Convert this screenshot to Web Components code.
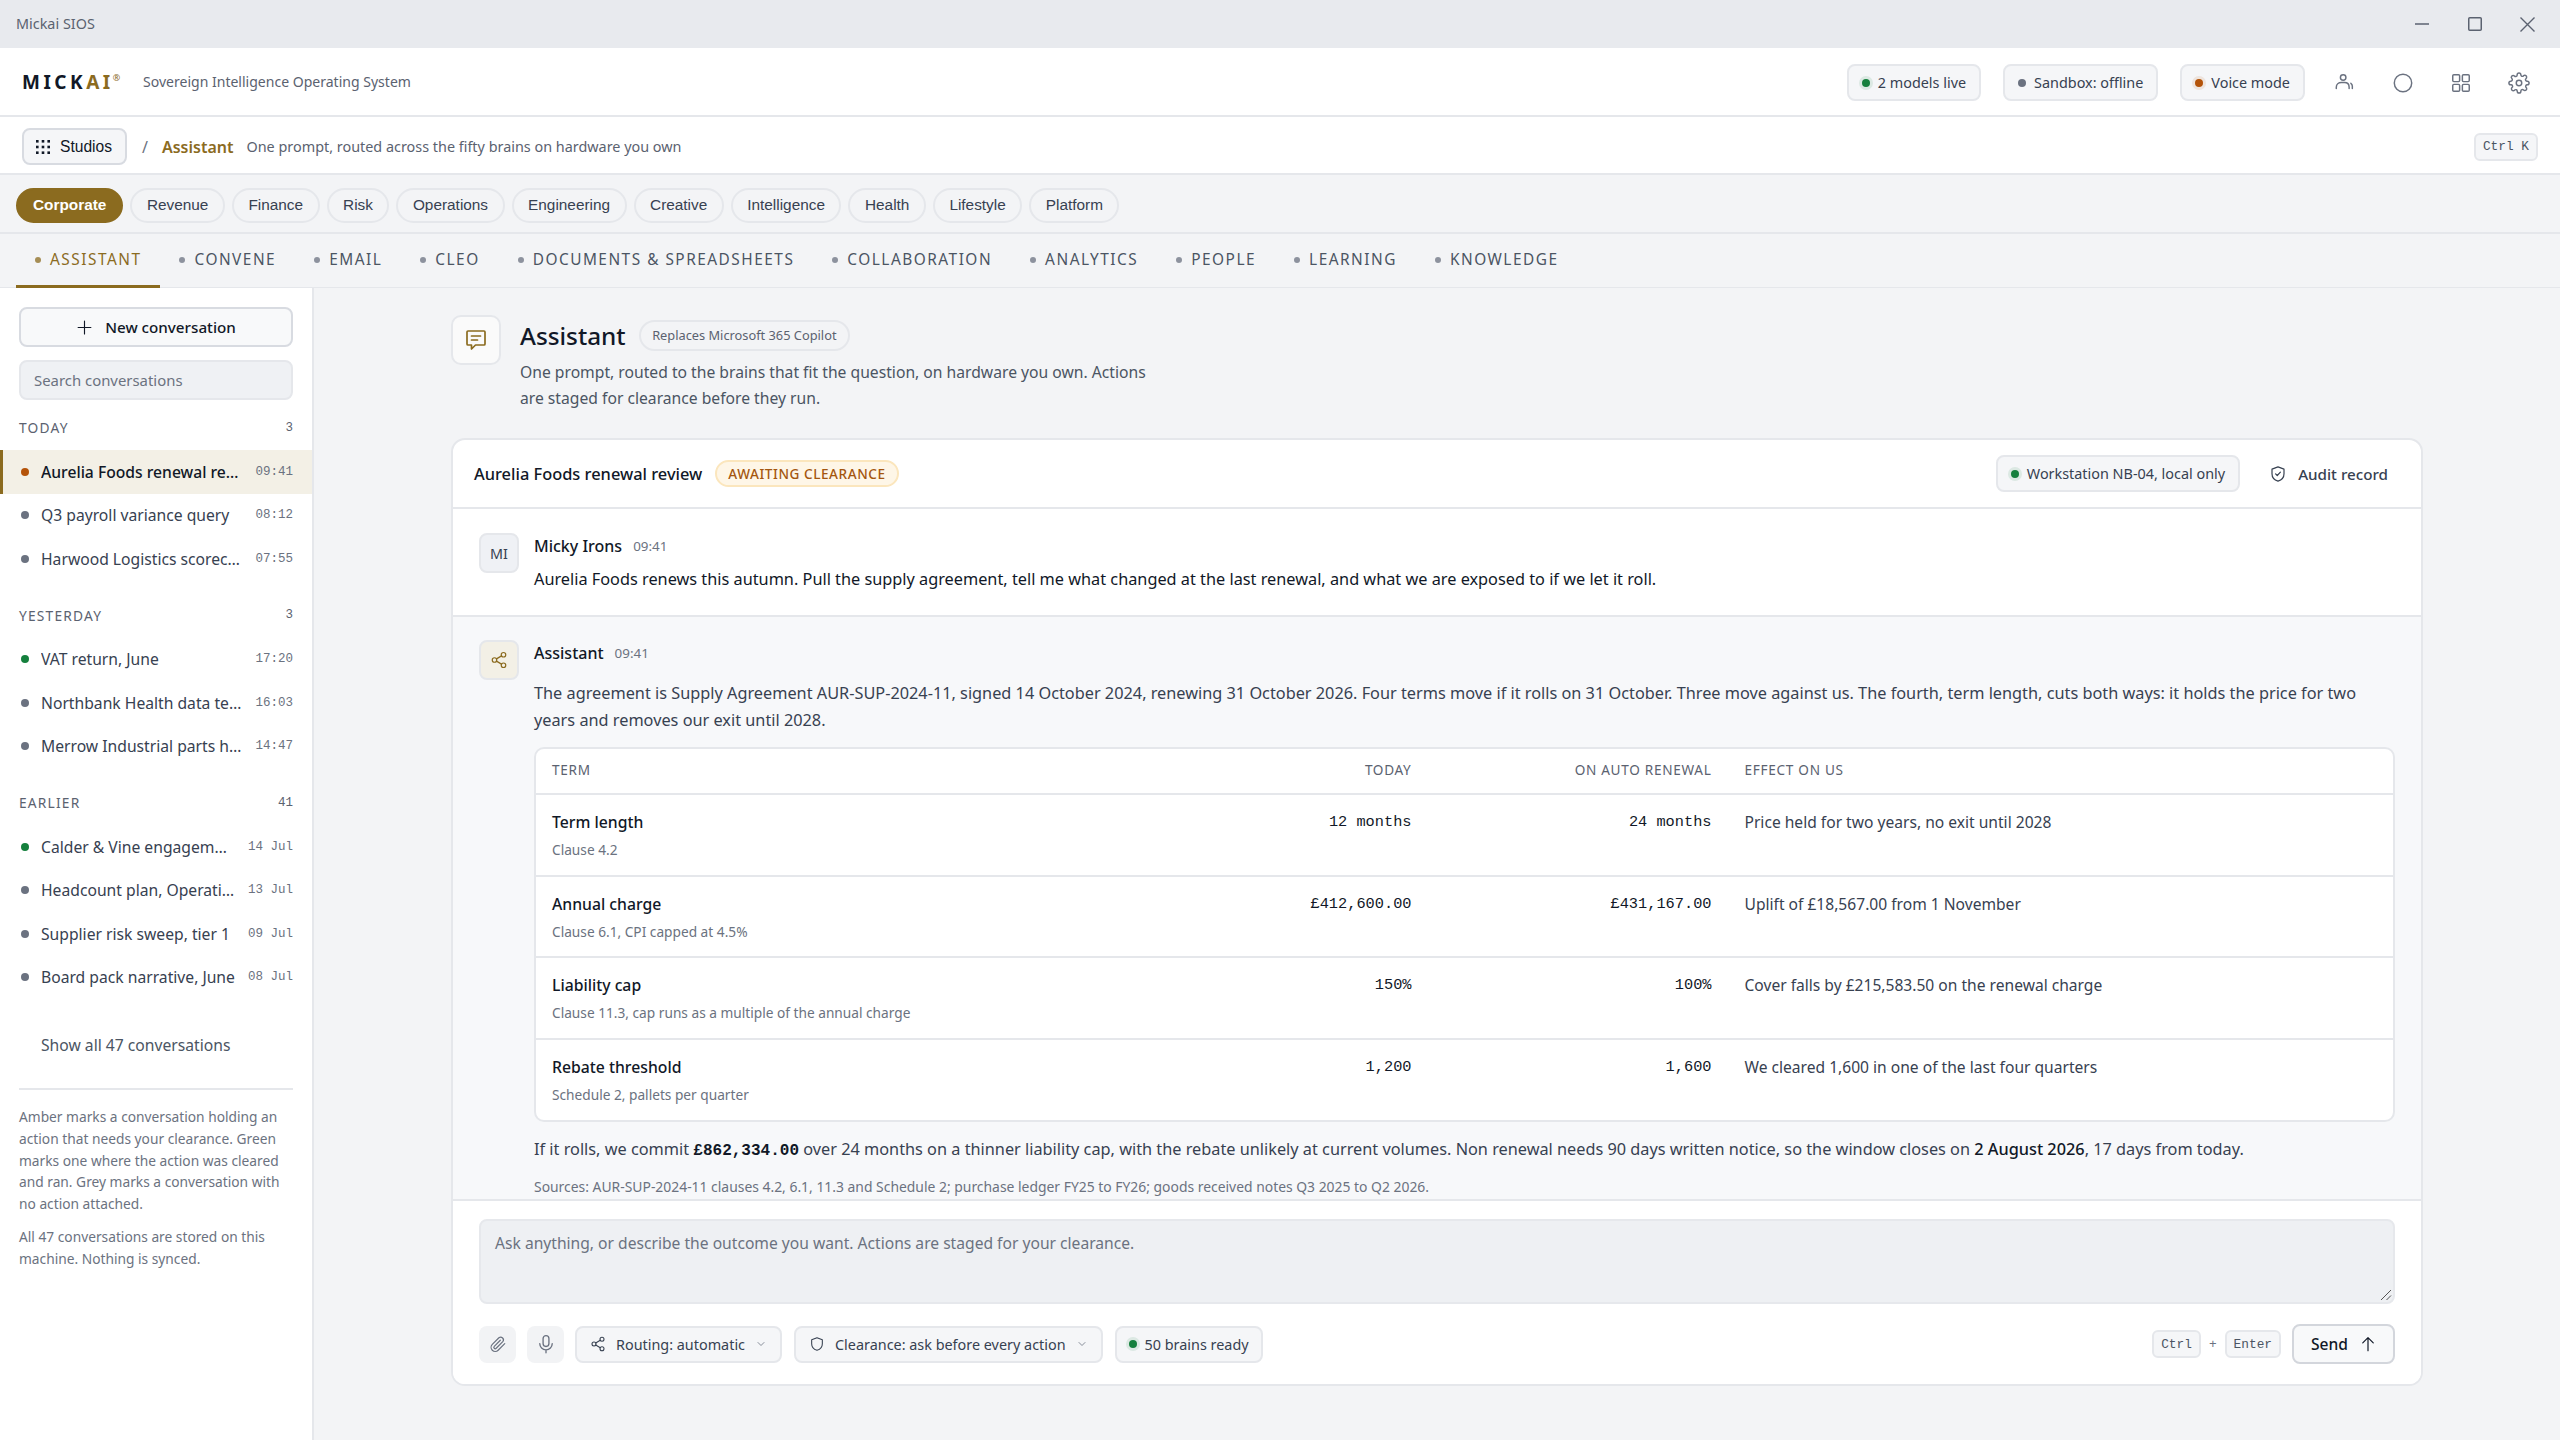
<!doctype html>
<html lang="en">
<head>
<meta charset="utf-8">
<title>Mickai SIOS</title>
<style>
  html, body { margin: 0; height: 100%; overflow: hidden; }
  body { font-family: "Noto Sans", sans-serif; color: #111827; background: #f3f4f6; }
</style>
</head>
<body>
<mk-app></mk-app>
<script>
const SANS = '"Noto Sans", sans-serif';
const MONO = '"Liberation Mono", monospace';
const BORDER = '#e5e7eb';

const icons = {
  person: '<circle cx="10" cy="6" r="3"/><path d="M2.5 18v-1.5C2.5 13.5 5 11.5 8 11.5h3.5c3 0 5 2 5 5V18"/><path d="M20 18v-2.5c0-1.4-.6-2.5-1.6-3.2"/>',
  circle: '<circle cx="12" cy="12" r="9.5"/>',
  grid: '<rect x="3" y="3" width="7.5" height="7.5" rx="1.2"/><rect x="13.5" y="3" width="7.5" height="7.5" rx="1.2"/><rect x="3" y="13.5" width="7.5" height="7.5" rx="1.2"/><rect x="13.5" y="13.5" width="7.5" height="7.5" rx="1.2"/>',
  gear: '<circle cx="12" cy="12" r="3"/><path d="M19.4 15a1.65 1.65 0 0 0 .33 1.82l.06.06a2 2 0 1 1-2.83 2.83l-.06-.06a1.65 1.65 0 0 0-2.82 1.17V21a2 2 0 1 1-4 0v-.09a1.65 1.65 0 0 0-2.82-1.17l-.06.06a2 2 0 1 1-2.83-2.83l.06-.06A1.65 1.65 0 0 0 3.09 14H3a2 2 0 1 1 0-4h.09a1.65 1.65 0 0 0 1.17-2.82l-.06-.06a2 2 0 1 1 2.83-2.83l.06.06A1.65 1.65 0 0 0 10 3.09V3a2 2 0 1 1 4 0v.09a1.65 1.65 0 0 0 2.82 1.17l.06-.06a2 2 0 1 1 2.83 2.83l-.06.06A1.65 1.65 0 0 0 20.91 10H21a2 2 0 1 1 0 4h-.09a1.65 1.65 0 0 0-1.51 1z"/>',
  share: '<circle cx="18" cy="5" r="3"/><circle cx="6" cy="12" r="3"/><circle cx="18" cy="19" r="3"/><path d="M8.6 13.5l6.8 4M15.4 6.5l-6.8 4"/>',
  shield: '<path d="M12 2.5l8 3v6c0 5-3.4 8.6-8 10-4.6-1.4-8-5-8-10v-6z"/>',
  shieldCheck: '<path d="M12 2.5l8 3v6c0 5-3.4 8.6-8 10-4.6-1.4-8-5-8-10v-6z"/><path d="M8.8 11.8l2.2 2.2 4.2-4.4"/>',
  chevron: '<path d="M6 9l6 6 6-6"/>',
  clip: '<path d="M21 11.5l-8.8 8.8a5.5 5.5 0 0 1-7.8-7.8l8.8-8.8a3.7 3.7 0 0 1 5.2 5.2l-8.8 8.8a1.8 1.8 0 0 1-2.6-2.6l8.1-8.1"/>',
  mic: '<rect x="8.5" y="2" width="7" height="13" rx="3.5"/><path d="M4.5 11.5a7.5 7.5 0 0 0 15 0M12 19v3.5"/>',
  plus: '<path d="M12 3v18M3 12h18"/>',
  arrow: '<path d="M12 21V3.5M5 10.5l7-7 7 7"/>',
  chat: '<path d="M4 3h16a1 1 0 0 1 1 1v12a1 1 0 0 1-1 1h-8.5L7.5 21v-4H4a1 1 0 0 1-1-1V4a1 1 0 0 1 1-1z"/><path d="M7.5 8h9M7.5 12h6"/>'
};
function icon(name, size, stroke, width) {
  return `<svg width="${size}" height="${size}" viewBox="0 0 24 24" fill="none" stroke="${stroke || 'currentColor'}" stroke-width="${width || 1.6}" stroke-linecap="round" stroke-linejoin="round">${icons[name]}</svg>`;
}

// small base class, every element just sets its markup once
class Base extends HTMLElement {
  constructor() {
    super();
    this.attachShadow({ mode: 'open' });
  }
  connectedCallback() {
    this.shadowRoot.innerHTML = this.render();
  }
}

class MkDot extends Base {
  render() {
    const colors = { green: '#15803d', grey: '#6b7280', amber: '#b45309', gold: '#8b6b1f' };
    const c = colors[this.getAttribute('tone')] || colors.grey;
    const size = this.getAttribute('size') || 8;
    const halo = this.hasAttribute('halo') ? `box-shadow: 0 0 0 3px ${c}1c;` : '';
    return `<style>:host { display: inline-block; flex: none; width: ${size}px; height: ${size}px; border-radius: 50%; background: ${c}; ${halo} }</style>`;
  }
}

class MkChip extends Base {
  render() {
    return `<style>
      :host { display: inline-flex; align-items: center; gap: var(--chip-gap, 8px); height: 37px; box-sizing: border-box; padding: 0 var(--chip-pad, 13px);
        background: #f5f6f8; border: 2px solid ${BORDER}; border-radius: 8px; font: 400 14.4px ${SANS}; color: #374151; white-space: nowrap; }
    </style><slot></slot>`;
  }
}

class MkKbd extends Base {
  render() {
    return `<style>
      :host { display: inline-flex; align-items: center; justify-content: center; height: 28px; box-sizing: border-box; padding: 0 7px;
        background: #f5f6f8; border: 2px solid ${BORDER}; border-radius: 6px; font: 400 12.8px ${MONO}; color: #4b5563; white-space: nowrap; }
    </style><slot></slot>`;
  }
}

class MkTitlebar extends Base {
  render() {
    return `<style>
      :host { display: flex; align-items: center; justify-content: space-between; height: 48px; flex: none; background: #e8eaee; padding-left: 16px; font: 400 14.4px ${SANS}; color: #5b6270; }
      .t { margin-bottom: 2px; }
      .ctl { display: flex; padding-right: 6px; }
      .ctl span { width: 53px; height: 48px; display: flex; align-items: center; justify-content: center; }
    </style>
    <span class="t">Mickai SIOS</span>
    <div class="ctl">
      <span><svg width="14" height="14" viewBox="0 0 14 14" stroke="#5b6270" stroke-width="1.5"><path d="M0 7h14"/></svg></span>
      <span><svg width="14" height="14" viewBox="0 0 14 14" fill="none" stroke="#5b6270" stroke-width="1.5"><rect x=".75" y=".75" width="12.5" height="12.5" rx="1"/></svg></span>
      <span><svg width="15" height="15" viewBox="0 0 15 15" stroke="#5b6270" stroke-width="1.4"><path d="M.5.5l14 14M14.5.5l-14 14"/></svg></span>
    </div>`;
  }
}

class MkHeader extends Base {
  render() {
    return `<style>
      :host { display: flex; align-items: center; height: 69px; box-sizing: border-box; flex: none; background: #fff; border-bottom: 2px solid ${BORDER}; padding: 2px 22px 0; }
      .logo { font: 700 19px ${SANS}; letter-spacing: 3.5px; color: #111827; display: flex; width: 121px; flex: none; margin-bottom: 1px; }
      .logo b { color: #8b6b1f; font-weight: 700; }
      .logo sup { font-size: 9px; font-weight: 400; letter-spacing: 0; color: #8b6b1f; line-height: 1; margin: 4px 0 0 -1px; }
      .tag { font-size: 14.04px; color: #5b6270; margin-bottom: 2px; }
      .right { margin-left: auto; display: flex; align-items: center; gap: 22px; }
      .ic { display: flex; gap: 36px; margin: 0 8px 0 7px; color: #6b7280; }
      .ic svg { display: block; }
    </style>
    <div class="logo">MICK<b>AI</b><sup>®</sup></div>
    <span class="tag">Sovereign Intelligence Operating System</span>
    <div class="right">
      <mk-chip><mk-dot tone="green" halo></mk-dot>2 models live</mk-chip>
      <mk-chip><mk-dot tone="grey"></mk-dot>Sandbox: offline</mk-chip>
      <mk-chip><mk-dot tone="amber" halo></mk-dot>Voice mode</mk-chip>
      <div class="ic">${icon('person', 22)}${icon('circle', 22)}${icon('grid', 22)}${icon('gear', 22)}</div>
    </div>`;
  }
}

class MkCrumbs extends Base {
  render() {
    return `<style>
      :host { display: flex; align-items: center; height: 58px; box-sizing: border-box; flex: none; background: #fff; border-bottom: 2px solid ${BORDER}; padding: 3px 22px 0; }
      button { display: flex; align-items: center; gap: 10px; height: 37px; width: 105px; box-sizing: border-box; padding: 0 0 0 12px; background: #f5f6f8;
        border: 2px solid #d8dbe1; border-radius: 8px; font: 400 15.6px "Liberation Sans", sans-serif; color: #111827; }
      .sl { margin: 0 14px 0 15px; color: #6b7280; font-size: 16px; }
      .cur { color: #8b6b1f; font-size: 16px; font-weight: 600; margin-right: 13px; }
      .d { font-size: 14.4px; color: #5b6270; }
      mk-kbd { margin-left: auto; }
      svg { display: block; }
    </style>
    <button><svg width="14" height="14" viewBox="0 0 14 14" fill="#111827">
      <rect x="0" y="0" width="2.6" height="2.6"/><rect x="5.7" y="0" width="2.6" height="2.6"/><rect x="11.4" y="0" width="2.6" height="2.6"/>
      <rect x="0" y="5.7" width="2.6" height="2.6"/><rect x="5.7" y="5.7" width="2.6" height="2.6"/><rect x="11.4" y="5.7" width="2.6" height="2.6"/>
      <rect x="0" y="11.4" width="2.6" height="2.6"/><rect x="5.7" y="11.4" width="2.6" height="2.6"/><rect x="11.4" y="11.4" width="2.6" height="2.6"/>
    </svg>Studios</button>
    <span class="sl">/</span><span class="cur">Assistant</span><span class="d">One prompt, routed across the fifty brains on hardware you own</span>
    <mk-kbd>Ctrl K</mk-kbd>`;
  }
}

class MkDomains extends Base {
  render() {
    const names = ['Corporate', 'Revenue', 'Finance', 'Risk', 'Operations', 'Engineering', 'Creative', 'Intelligence', 'Health', 'Lifestyle', 'Platform'];
    return `<style>
      :host { display: flex; align-items: center; gap: 7px; height: 59px; box-sizing: border-box; flex: none; border-bottom: 2px solid ${BORDER}; padding: 3px 16px 0; background: #f3f4f6; }
      span { display: flex; align-items: center; height: 35px; box-sizing: border-box; padding: 0 14.5px; border: 2px solid ${BORDER}; border-radius: 18px;
        font: 400 15.36px "Liberation Sans", sans-serif; color: #374151; }
      .on { background: #8b6b1f; border-color: #8b6b1f; color: #fff; font-weight: 700; padding: 0 15px; }
    </style>` + names.map((n, i) => `<span class="${i ? '' : 'on'}">${n}</span>`).join('');
  }
}

class MkTabs extends Base {
  render() {
    const names = ['Assistant', 'Convene', 'Email', 'Cleo', 'Documents &amp; Spreadsheets', 'Collaboration', 'Analytics', 'People', 'Learning', 'Knowledge'];
    return `<style>
      :host { display: flex; height: 54px; box-sizing: border-box; flex: none; border-bottom: 1px solid ${BORDER}; padding: 0 16px; background: #f3f4f6; }
      div { display: flex; align-items: center; gap: 9px; padding: 0 19px; margin-bottom: -1px; box-sizing: border-box; border-bottom: 3px solid transparent;
        font: 400 15.4px ${SANS}; letter-spacing: 1.5px; text-transform: uppercase; color: #4b5563; }
      .on { color: #8b6b1f; border-bottom-color: #8b6b1f; }
      mk-dot { opacity: .75; }
    </style>` + names.map((n, i) => `<div class="${i ? '' : 'on'}"><mk-dot size="6" tone="${i ? 'grey' : 'gold'}"></mk-dot>${n}</div>`).join('');
  }
}

class MkConv extends Base {
  render() {
    const active = this.hasAttribute('active');
    return `<style>
      :host { display: flex; align-items: center; height: 43.5px; box-sizing: border-box; padding: 0 19px 0 21px; gap: 12px; font: ${active ? 500 : 400} 15.68px ${SANS}; color: ${active ? '#111827' : '#374151'};
        ${active ? 'background: #f3f0e6; box-shadow: inset 3px 0 0 #8b6b1f;' : ''} }
      .t { flex: 1; min-width: 0; white-space: nowrap; overflow: hidden; }
      .w { flex: none; font: 400 12.5px ${MONO}; color: #6b7280; }
    </style>
    <mk-dot tone="${this.getAttribute('tone')}"></mk-dot><span class="t"><slot></slot></span><span class="w">${this.getAttribute('when')}</span>`;
  }
}

class MkGroup extends Base {
  render() {
    return `<style>
      :host { display: block; margin-bottom: 23px; }
      .h { display: flex; justify-content: space-between; align-items: center; height: 23px; padding: 0 19px; margin-bottom: 11px; font: 400 13.76px ${SANS}; letter-spacing: 1.2px; color: #5b6270; text-transform: uppercase; }
      .h span:last-child { font: 400 12.5px ${MONO}; letter-spacing: 0; }
    </style>
    <div class="h"><span>${this.getAttribute('label')}</span><span>${this.getAttribute('count')}</span></div><slot></slot>`;
  }
}

class MkSidebar extends Base {
  render() {
    return `<style>
      :host { display: flex; flex-direction: column; flex: none; width: 314px; box-sizing: border-box; background: #fff; border-right: 2px solid ${BORDER}; padding-top: 19px; overflow: hidden; }
      .new { display: flex; align-items: center; justify-content: center; gap: 12px; height: 40px; flex: none; margin: 0 19px 13px; box-sizing: border-box; background: #f8f9fa; border: 2px solid #d8dbe1; border-radius: 8px;
        font: 500 15.2px ${SANS}; color: #111827; }
      .search { display: flex; align-items: center; height: 40px; flex: none; margin: 0 19px 16px; padding: 0 13px; box-sizing: border-box; background: #eff1f4; border: 2px solid ${BORDER}; border-radius: 8px; font-size: 14.9px; color: #6b7280; }
      .all { padding-left: 41px; height: 22px; flex: none; margin: 12px 0 32px; font-size: 15.68px; color: #4b5563; line-height: 22px; }
      .note { margin: 0 19px; padding-top: 16px; border-top: 2px solid ${BORDER}; font-size: 13.76px; line-height: 21.8px; color: #6b7280; }
      .note p { margin: 0 0 11px; }
      svg { display: block; }
    </style>
    <div class="new">${icon('plus', 17)}New conversation</div>
    <div class="search">Search conversations</div>
    <slot></slot>
    <div class="all">Show all 47 conversations</div>
    <div class="note">
      <p>Amber marks a conversation holding an action that needs your clearance. Green marks one where the action was cleared and ran. Grey marks a conversation with no action attached.</p>
      <p>All 47 conversations are stored on this machine. Nothing is synced.</p>
    </div>`;
  }
}

class MkPageHead extends Base {
  render() {
    return `<style>
      :host { display: flex; gap: 19px; flex: none; margin-bottom: 27px; }
      .box { width: 50px; height: 50px; box-sizing: border-box; background: #fafafa; border: 2px solid ${BORDER}; border-radius: 10px; display: flex; align-items: center; justify-content: center; flex: none; color: #8b6b1f; }
      .row { display: flex; align-items: center; gap: 13px; height: 40px; }
      h1 { margin: 0; font: 500 24.3px ${SANS}; color: #111827; }
      .tag { display: flex; align-items: center; height: 31px; box-sizing: border-box; padding: 0 11.5px; border: 2px solid ${BORDER}; border-radius: 16px; font-size: 12.8px; color: #5b6270; }
      p { margin: 5px 0 0; width: 640px; font-size: 15.68px; line-height: 25.6px; color: #4b5563; }
      svg { display: block; }
    </style>
    <div class="box">${icon('chat', 24, 'currentColor', 1.7)}</div>
    <div>
      <div class="row"><h1>Assistant</h1><span class="tag">Replaces Microsoft 365 Copilot</span></div>
      <p>One prompt, routed to the brains that fit the question, on hardware you own. Actions are staged for clearance before they run.</p>
    </div>`;
  }
}

class MkCardHead extends Base {
  render() {
    return `<style>
      :host { display: flex; align-items: center; flex: none; height: 69px; box-sizing: border-box; border-bottom: 2px solid ${BORDER}; padding: 0 33px 0 21px; }
      .t { font: 500 16.4px ${SANS}; color: #111827; margin-right: 13px; }
      .b { display: flex; align-items: center; height: 27px; box-sizing: border-box; padding: 0 11px; background: #fef6e7; border: 2px solid #fbe6bd; border-radius: 14px; font: 500 13.6px ${SANS}; letter-spacing: .55px; color: #a4560f; }
      .r { margin-left: auto; display: flex; align-items: center; }
      .a { display: flex; align-items: center; gap: 11px; margin-left: 29px; font: 500 15.2px ${SANS}; color: #374151; }
      svg { display: block; }
    </style>
    <span class="t">Aurelia Foods renewal review</span><span class="b">AWAITING CLEARANCE</span>
    <div class="r"><mk-chip><mk-dot tone="green" halo></mk-dot>Workstation NB-04, local only</mk-chip>
    <span class="a">${icon('shieldCheck', 18)}Audit record</span></div>`;
  }
}

class MkMessage extends Base {
  render() {
    const bot = this.hasAttribute('assistant');
    return `<style>
      :host { display: flex; gap: 15px; padding: ${bot ? 23 : 24}px 26px 0; box-sizing: border-box; flex: none; ${bot ? 'background: #f7f8fa;' : 'height: 108px; background: #fff; border-bottom: 2px solid ' + BORDER + ';'} }
      .av { width: 40px; height: 40px; box-sizing: border-box; flex: none; border-radius: 8px; display: flex; align-items: center; justify-content: center; border: 2px solid ${BORDER};
        background: ${bot ? '#f3f0e6' : '#eff1f5'}; color: ${bot ? '#8b6b1f' : '#374151'}; font-size: 14.4px; }
      .b { flex: 1; min-width: 0; }
      .h { display: flex; align-items: center; gap: 11px; height: 26px; font: 500 16px ${SANS}; color: #111827; }
      .h span { font-size: 13.4px; font-weight: 400; color: #6b7280; }
      svg { display: block; }
    </style>
    <div class="av">${bot ? icon('share', 18) : 'MI'}</div>
    <div class="b"><div class="h">${this.getAttribute('who')}<span>${this.getAttribute('at')}</span></div><slot></slot></div>`;
  }
}

class MkTermTable extends Base {
  render() {
    const rows = [
      ['Term length', 'Clause 4.2', '12 months', '24 months', 'Price held for two years, no exit until 2028'],
      ['Annual charge', 'Clause 6.1, CPI capped at 4.5%', '£412,600.00', '£431,167.00', 'Uplift of £18,567.00 from 1 November'],
      ['Liability cap', 'Clause 11.3, cap runs as a multiple of the annual charge', '150%', '100%', 'Cover falls by £215,583.50 on the renewal charge'],
      ['Rebate threshold', 'Schedule 2, pallets per quarter', '1,200', '1,600', 'We cleared 1,600 in one of the last four quarters']
    ];
    return `<style>
      :host { display: block; background: #fff; border: 2px solid ${BORDER}; border-radius: 10px; margin: 13px 0 14px; }
      .r { display: grid; grid-template-columns: 589.5px 300px 300px 1fr; height: 81.6px; box-sizing: border-box; border-top: 2px solid ${BORDER}; }
      .head { height: 44px; padding-bottom: 3px; border-top: 0; align-items: center; font-size: 13.6px; letter-spacing: .7px; color: #5b6270; }
      .r > div { padding: 0 14px; }
      .r > div:first-child { padding-left: 16px; }
      .r > div:last-child { padding-left: 19px; }
      .n { text-align: right; }
      .v { padding-top: 17px !important; font: 400 15.3px/20px ${MONO}; color: #111827; }
      .fx { padding-top: 17px !important; font-size: 15.6px; line-height: 20px; color: #374151; }
      .t { padding-top: 17px !important; }
      .t b { display: block; font: 500 15.76px/20px ${SANS}; color: #111827; }
      .t small { display: block; margin-top: 8px; font-size: 13.7px; line-height: 20px; color: #6b7280; }
    </style>
    <div class="r head"><div>TERM</div><div class="n">TODAY</div><div class="n">ON AUTO RENEWAL</div><div>EFFECT ON US</div></div>
    ${rows.map(r => `<div class="r"><div class="t"><b>${r[0]}</b><small>${r[1]}</small></div><div class="n v">${r[2]}</div><div class="n v">${r[3]}</div><div class="fx">${r[4]}</div></div>`).join('')}`;
  }
}

class MkAnswer extends Base {
  render() {
    return `<style>
      :host { display: block; font-size: 16.3px; line-height: 27px; color: #374151; }
      p { margin: 14px 0 0; }
      .m { font: 700 16px ${MONO}; color: #111827; }
      .s { color: #111827; font-weight: 500; }
      .src { margin-top: 13px; font-size: 13.9px; line-height: 22px; color: #6b7280; white-space: nowrap; }
      .after { margin: 0; }
    </style>
    <p>The agreement is Supply Agreement AUR-SUP-2024-11, signed 14 October 2024, renewing 31 October 2026. Four terms move if it rolls on 31 October. Three move against us. The fourth, term length, cuts both ways: it holds the price for two years and removes our exit until 2028.</p>
    <mk-term-table></mk-term-table>
    <p class="after">If it rolls, we commit <span class="m">£862,334.00</span> over 24 months on a thinner liability cap, with the rebate unlikely at current volumes. Non renewal needs 90 days written notice, so the window closes on <span class="s">2 August 2026</span>, 17 days from today.</p>
    <div class="src">Sources: AUR-SUP-2024-11 clauses 4.2, 6.1, 11.3 and Schedule 2; purchase ledger FY25 to FY26; goods received notes Q3 2025 to Q2 2026.</div>`;
  }
}

class MkComposer extends Base {
  render() {
    return `<style>
      :host { display: block; flex: none; height: 185px; box-sizing: border-box; background: #fff; border-top: 2px solid ${BORDER}; padding: 18px 26px 0; font-size: 14.4px; }
      .box { position: relative; height: 85px; box-sizing: border-box; background: #eef0f3; border: 2px solid #e6e8ec; border-radius: 8px; padding: 10px 14px; font-size: 15.64px; line-height: 24px; color: #6b7280; }
      .grip { position: absolute; right: 1px; bottom: 1px; }
      .bar { display: flex; align-items: center; gap: 11px; margin-top: 20px; height: 40px; }
      .sq { width: 37px; height: 37px; flex: none; background: #f2f3f5; border-radius: 8px; display: flex; align-items: center; justify-content: center; color: #6b7280; }
      mk-chip + mk-chip { margin-left: 1px; }
      .pick { --chip-gap: 10px; --chip-pad: 13px; }
      .tight { --chip-pad: 12px; }
      .pick svg:last-child { color: #6b7280; }
      .end { margin-left: auto; display: flex; align-items: center; gap: 8px; }
      .plus { color: #6b7280; font: 400 12.8px ${MONO}; }
      .send { display: flex; align-items: center; gap: 11px; height: 40px; width: 103px; box-sizing: border-box; padding-left: 17px; margin-left: 3px; background: #f8f9fa; border: 2px solid #d3d6dc; border-radius: 8px; font: 500 15.6px ${SANS}; color: #111827; }
      svg { display: block; flex: none; }
    </style>
    <div class="box">Ask anything, or describe the outcome you want. Actions are staged for your clearance.
      <svg class="grip" width="14" height="14" viewBox="0 0 14 14" stroke="#555" stroke-width="1"><path d="M3 13L13 3M8.5 13L13 8.5"/></svg>
    </div>
    <div class="bar">
      <div class="sq">${icon('clip', 18)}</div>
      <div class="sq">${icon('mic', 20)}</div>
      <mk-chip class="pick">${icon('share', 16)}Routing: automatic${icon('chevron', 12)}</mk-chip>
      <mk-chip class="pick">${icon('shield', 16)}Clearance: ask before every action${icon('chevron', 12)}</mk-chip>
      <mk-chip class="tight"><mk-dot tone="green" halo></mk-dot>50 brains ready</mk-chip>
      <div class="end"><mk-kbd>Ctrl</mk-kbd><span class="plus">+</span><mk-kbd>Enter</mk-kbd>
        <div class="send">Send${icon('arrow', 18)}</div></div>
    </div>`;
  }
}

class MkApp extends Base {
  render() {
    const group = (label, count, items) => `<mk-group label="${label}" count="${count}">` + items.map(i =>
      `<mk-conv tone="${i[0]}" when="${i[1]}" ${i[3] ? 'active' : ''}>${i[2]}</mk-conv>`).join('') + '</mk-group>';
    return `<style>
      :host { display: flex; flex-direction: column; height: 100vh; overflow: hidden; font-family: ${SANS}; }
      .body { flex: 1; min-height: 0; display: flex; }
      main { flex: 1; min-width: 0; display: flex; flex-direction: column; align-items: center; padding: 27px 0 54px; box-sizing: border-box; }
      .page { width: 1972px; flex: 1; min-height: 0; display: flex; flex-direction: column; }
      .card { flex: 1; min-height: 0; display: flex; flex-direction: column; background: #fff; border: 2px solid ${BORDER}; border-radius: 14px; overflow: hidden; }
      .scroll { flex: 1; min-height: 0; overflow: hidden; display: flex; flex-direction: column; background: #f7f8fa; }
      .q { margin: 7px 0 0; font-size: 16.3px; line-height: 26px; color: #111827; }
    </style>
    <mk-titlebar></mk-titlebar>
    <mk-header></mk-header>
    <mk-crumbs></mk-crumbs>
    <mk-domains></mk-domains>
    <mk-tabs></mk-tabs>
    <div class="body">
      <mk-sidebar>
        ${group('Today', 3, [['amber', '09:41', 'Aurelia Foods renewal re…', 1], ['grey', '08:12', 'Q3 payroll variance query'], ['grey', '07:55', 'Harwood Logistics scorec…']])}
        ${group('Yesterday', 3, [['green', '17:20', 'VAT return, June'], ['grey', '16:03', 'Northbank Health data te…'], ['grey', '14:47', 'Merrow Industrial parts h…']])}
        ${group('Earlier', 41, [['green', '14 Jul', 'Calder &amp; Vine engagem…'], ['grey', '13 Jul', 'Headcount plan, Operati…'], ['grey', '09 Jul', 'Supplier risk sweep, tier 1'], ['grey', '08 Jul', 'Board pack narrative, June']])}
      </mk-sidebar>
      <main><div class="page">
        <mk-page-head></mk-page-head>
        <div class="card">
          <mk-card-head></mk-card-head>
          <div class="scroll">
            <mk-message who="Micky Irons" at="09:41"><p class="q">Aurelia Foods renews this autumn. Pull the supply agreement, tell me what changed at the last renewal, and what we are exposed to if we let it roll.</p></mk-message>
            <mk-message assistant who="Assistant" at="09:41"><mk-answer></mk-answer></mk-message>
          </div>
          <mk-composer></mk-composer>
        </div>
      </div></main>
    </div>`;
  }
}

const tags = {
  'mk-dot': MkDot, 'mk-chip': MkChip, 'mk-kbd': MkKbd, 'mk-titlebar': MkTitlebar, 'mk-header': MkHeader, 'mk-crumbs': MkCrumbs,
  'mk-domains': MkDomains, 'mk-tabs': MkTabs, 'mk-conv': MkConv, 'mk-group': MkGroup, 'mk-sidebar': MkSidebar, 'mk-page-head': MkPageHead,
  'mk-card-head': MkCardHead, 'mk-message': MkMessage, 'mk-term-table': MkTermTable, 'mk-answer': MkAnswer, 'mk-composer': MkComposer, 'mk-app': MkApp
};
for (const t in tags) customElements.define(t, tags[t]);
</script>
</body>
</html>
